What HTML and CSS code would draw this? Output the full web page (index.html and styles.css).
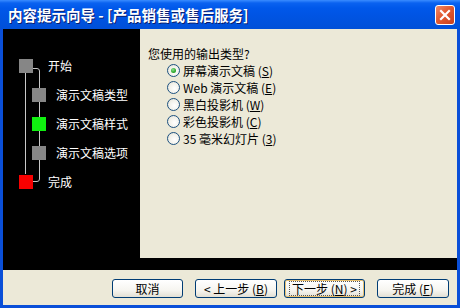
FILE: index.html
```html
<!DOCTYPE html>
<html>
<head>
<meta charset="utf-8">
<link rel="stylesheet" href="styles.css">
</head>
<body>
<div class="window">
  <div class="titlebar">
    <span class="title">内容提示向导 - [产品销售或售后服务]</span>
    <span class="close"><svg width="12" height="12" viewBox="0 0 12 12"><path d="M2 2L10 10M10 2L2 10" stroke="#fff" stroke-width="2.2" stroke-linecap="square"/></svg></span>
  </div>
  <div class="body">
    <div class="main">
      <div class="steps">
        <svg class="links" width="137" height="241" viewBox="0 0 137 241">
          <path d="M22.5 44V145" stroke="#c8c8c8" fill="none"/>
          <path d="M30 39.5H34Q36.5 39.5 36.5 42V150Q36.5 152.5 34 152.5H30" stroke="#c8c8c8" fill="none"/>
        </svg>
        <div class="step"><span class="sq gray"></span><span class="lbl top">开始</span></div>
        <div class="step sub"><span class="sq gray"></span><span class="lbl">演示文稿类型</span></div>
        <div class="step sub"><span class="sq green"></span><span class="lbl">演示文稿样式</span></div>
        <div class="step sub"><span class="sq gray"></span><span class="lbl">演示文稿选项</span></div>
        <div class="step"><span class="sq red"></span><span class="lbl top">完成</span></div>
      </div>
      <div class="panel">
        <div class="question">您使用的输出类型?</div>
        <div class="opts">
          <div class="opt"><span class="radio on"></span><span>屏幕演示文稿 (<u>S</u>)</span></div>
          <div class="opt"><span class="radio"></span><span>Web 演示文稿 (<u>E</u>)</span></div>
          <div class="opt"><span class="radio"></span><span>黑白投影机 (<u>W</u>)</span></div>
          <div class="opt"><span class="radio"></span><span>彩色投影机 (<u>C</u>)</span></div>
          <div class="opt"><span class="radio"></span><span>35 毫米幻灯片 (<u>3</u>)</span></div>
        </div>
      </div>
    </div>
    <div class="strip"></div>
    <div class="buttons">
      <span class="btn w71">取消</span>
      <span class="btn w82 g12">&lt; 上一步 (<u>B</u>)</span>
      <span class="btn w81 g7 focus"><span class="fr">下一步 (<u>N</u>) &gt;</span></span>
      <span class="btn w72 g12">完成 (<u>F</u>)</span>
    </div>
  </div>
</div>
</body>
</html>
```

FILE: styles.css
```css
* { box-sizing: border-box; }
html, body { margin: 0; padding: 0; background: #0054e3; }
body { font-family: "Noto Sans CJK SC", "DejaVu Sans", sans-serif; font-size: 12px; }
.window {
  width: 460px; height: 308px; display: flex; flex-direction: column;
  background: #0a4fd8; position: relative; overflow: hidden;
}
.titlebar {
  height: 29px; flex: none; display: flex; align-items: center; justify-content: space-between;
  padding: 0 5px 0 8px;
  background: linear-gradient(#3a8cff 0, #0a62f0 3px, #0058ea 8px, #0054e3 55%, #0050d8 100%);
}
.title {
  color: #fff; font-weight: bold; font-size: 14.5px; line-height: 29px;
  text-shadow: 1px 1px 0 #0a1e6e;
}
.close {
  width: 20px; height: 20px; border: 1px solid #fff; border-radius: 3px;
  background: linear-gradient(135deg, #f08a6a 0, #e25a30 45%, #c8401e 100%);
  display: flex; align-items: center; justify-content: center;
}
.body { flex: 1; display: flex; flex-direction: column; margin: 0 3px 3px; background: #000; position: relative; }
.main { height: 229px; display: flex; flex: none; }
.steps { width: 137px; flex: none; position: relative; padding: 30px 0 0 16px; color: #fff; }
.links { position: absolute; left: 0; top: 0; }
.step { position: relative; display: flex; align-items: center; height: 14px; margin-bottom: 15px; }
.step.sub { margin-left: 13px; }
.sq { width: 14px; height: 14px; flex: none; }
.gray { background: #868686; }
.green { background: #10f010; }
.red { background: #f80000; }
.lbl { margin-left: 10px; white-space: nowrap; line-height: 14px; }
.lbl.top { margin-left: 15px; }
.panel { flex: 1; background: #ece9d8; padding: 16px 0 0 8px; color: #000; }
.question { line-height: 17px; }
.opts { padding-left: 19px; }
.opt { display: flex; align-items: center; height: 17px; line-height: 17px; }
.radio {
  width: 13px; height: 13px; border-radius: 50%; flex: none; margin-right: 3px;
  border: 1px solid #1c5180;
  background: radial-gradient(circle at 60% 60%, #fff 0, #f2f1ea 55%, #dcd9cc 100%);
  display: flex; align-items: center; justify-content: center;
}
.radio.on::after {
  content: ""; width: 5px; height: 5px; border-radius: 50%;
  background: radial-gradient(circle at 40% 35%, #8fe08f 0, #2ca82c 60%, #1a8a1a 100%);
}
.strip { height: 12px; flex: none; background: #000; }
.buttons {
  flex: 1; background: #ece9d8; display: flex; align-items: flex-start;
  padding: 9px 0 0 109px;
}
.btn {
  height: 19px; display: flex; align-items: center; justify-content: center;
  border: 1px solid #003c74; border-radius: 3px; color: #000; white-space: nowrap;
  background: linear-gradient(#ffffff 0, #f6f5f0 60%, #e3e0d4 100%);
}
.w71 { width: 71px; } .w82 { width: 82px; } .w81 { width: 81px; } .w72 { width: 72px; }
.g12 { margin-left: 12px; } .g7 { margin-left: 7px; }
.focus { box-shadow: inset 0 0 0 1px #e8c070; }
.fr { border: 1px dotted #555; padding: 0 2px; line-height: 13px; }
```
